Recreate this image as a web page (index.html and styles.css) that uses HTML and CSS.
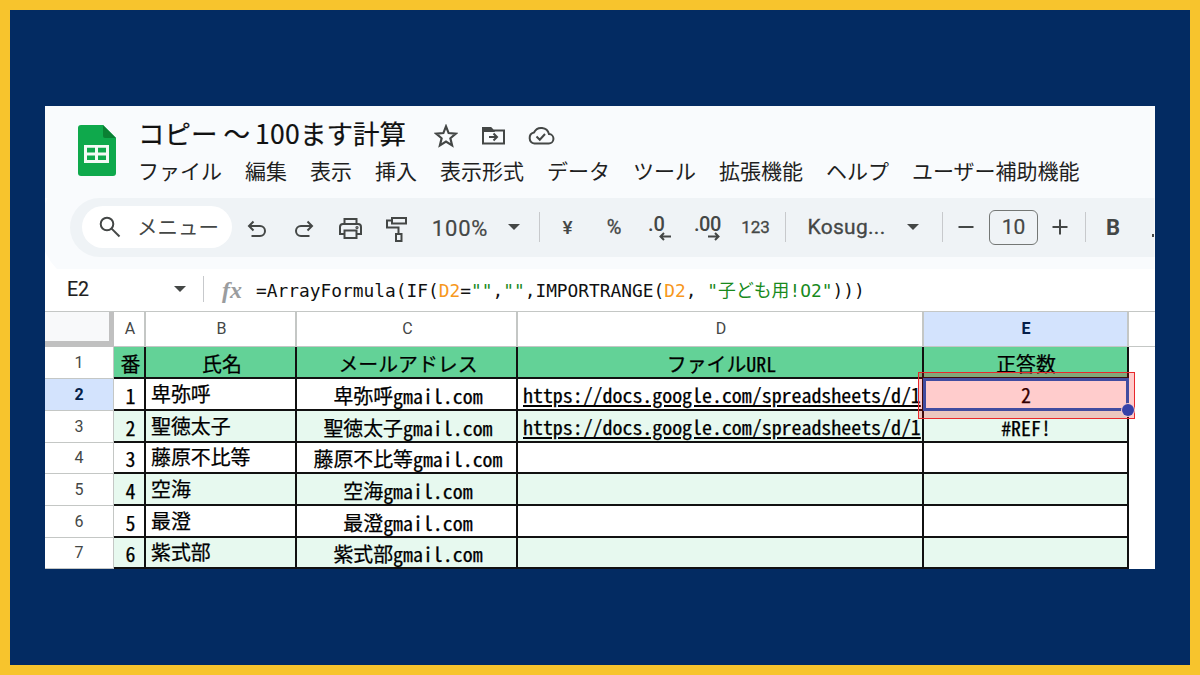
FILE: index.html
```html
<!DOCTYPE html>
<html lang="ja">
<head>
<meta charset="utf-8">
<title>コピー 〜 100ます計算</title>
<link rel="stylesheet" href="styles.css">
</head>
<body>
<main class="window">
  <header class="head">
    <svg class="logo" viewBox="0 0 38 51"><path d="M3 0H25L38 13V48Q38 51 35 51H3Q0 51 0 48V3Q0 0 3 0Z" fill="#0fa94c"/><path d="M25 0L38 13H27Q25 13 25 11Z" fill="#0a8033"/><path d="M6 20H31V38H6ZM9 22.800V27.500H17V22.800ZM20 22.800V27.500H28V22.800ZM9 30.500V35H17V30.500ZM20 30.500V35H28V30.500Z" fill="#f4fbf6" fill-rule="evenodd"/></svg>
    <div class="heading">
      <div class="title-row">
        <h1 class="title">コピー 〜 <span class="hundred">100</span>ます計算</h1>
        <svg class="star" viewBox="0 0 22 22"><path d="M11 2.200L13.400 8.300L20 8.800L15 13.100L16.600 19.600L11 16.100L5.400 19.600L7 13.100L2 8.800L8.600 8.300Z"/></svg>
        <svg class="folder" viewBox="0 0 25 20"><path d="M2 4V17.500H23V4.500H12L9.500 2H2Z"/><path class="tab" d="M2 2H9.500L12 5H2Z"/><path d="M8 11H16M12.500 7.500L16 11L12.500 14.500"/></svg>
        <svg class="cloud" viewBox="0 0 28 20"><path d="M7.500 17.500H21.500A4.700 4.700 0 0 0 22 8.100A8 8 0 0 0 7 6.500A5.600 5.600 0 0 0 7.500 17.500Z"/><path d="M9.500 10.500L12.800 13.700L18 8"/></svg>
      </div>
      <nav class="menu"><span>ファイル</span><span>編集</span><span>表示</span><span>挿入</span><span>表示形式</span><span>データ</span><span>ツール</span><span>拡張機能</span><span>ヘルプ</span><span>ユーザー補助機能</span></nav>
    </div>
  </header>

  <div class="toolbar">
    <div class="search"><svg class="lens" viewBox="0 0 22 22"><circle cx="8" cy="8" r="6.300"/><path d="M12.600 12.600L20.500 20.500"/></svg><span>メニュー</span></div>
    <div class="tools">
      <div class="tool"><svg class="ico drop" width="20" height="18" viewBox="0 0 20 18"><path d="M6.500 1.500L2 6L6.500 10.500M2 6H13A5 5 0 0 1 13 16H4.500"/></svg></div>
      <div class="tool"><svg class="ico drop" width="20" height="18" viewBox="0 0 20 18"><path d="M13.500 1.500L18 6L13.500 10.500M18 6H7A5 5 0 0 0 7 16H15.500"/></svg></div>
      <div class="tool"><svg class="ico print" width="25" height="23" viewBox="0 0 25 23"><path d="M6.500 7V2H18.500V7M6 17H2V10Q2 7 5 7H20Q23 7 23 10V17H19M6.500 13.500H18.500V21H6.500Z"/><circle cx="19" cy="10.500" r=".6"/></svg></div>
      <div class="tool"><svg class="ico roller" width="23" height="27" viewBox="0 0 23 27"><path d="M7 2H21V7.500H7ZM7 4.500H2V11.500H13.500V18M11 18H16.500V25H11Z"/></svg></div>
      <div class="tool zoom">100%</div>
      <div class="tool"><i class="caret"></i></div>
      <div class="tool"><i class="sep"></i></div>
      <div class="tool small">¥</div>
      <div class="tool small percent">%</div>
      <div class="tool"><div class="dec"><b>.0</b><svg width="13" height="9" viewBox="0 0 13 9"><path d="M5 1L1.500 4.500L5 8M1.500 4.500H12"/></svg></div></div>
      <div class="tool"><div class="dec more"><b>.00</b><svg width="13" height="9" viewBox="0 0 13 9"><path d="M8 1L11.500 4.500L8 8M11.500 4.500H1"/></svg></div></div>
      <div class="tool n123">123</div>
      <div class="tool"><i class="sep"></i></div>
      <div class="tool font">Kosug...</div>
      <div class="tool"><i class="caret"></i></div>
      <div class="tool"><i class="sep"></i></div>
      <div class="tool"><svg class="ico" width="16" height="16" viewBox="0 0 16 16"><path d="M0.500 8H15.500"/></svg></div>
      <div class="tool"><div class="size">10</div></div>
      <div class="tool"><svg class="ico" width="16" height="16" viewBox="0 0 16 16"><path d="M0.500 8H15.500M8 0.500V15.500"/></svg></div>
      <div class="tool"><i class="sep"></i></div>
      <div class="tool bold">B</div>
      <div class="tool edge"><i class="bit"></i></div>
    </div>
  </div>

  <div class="formula-bar">
    <span class="ref">E2</span><i class="caret"></i><i class="fsep"></i><span class="fx">fx</span>
    <code class="formula">=ArrayFormula(IF(<em>D2</em>=<q>""</q>,<q>""</q>,IMPORTRANGE(<em>D2</em>, <q>"<span class="kana">子ども用</span>!O2"</q>)))</code>
  </div>

  <div class="sheet">
    <div class="row cols"><div class="corner"></div><div>A</div><div>B</div><div>C</div><div>D</div><div class="sel">E</div><div class="rest"></div></div>
    <div class="row th"><div class="num">1</div><div>番</div><div>氏名</div><div>メールアドレス</div><div>ファイル<span class="lat">URL</span></div><div>正答数</div></div>
    <div class="row"><div class="num sel">2</div><div><span class="lat">1</span></div><div class="name">卑弥呼</div><div>卑弥呼<span class="lat">gmail.com</span></div><div class="url"><span class="lat">https://docs.google.com/spreadsheets/d/1</span></div><div class="active"><span class="lat">2</span><i class="outline"></i><i class="mark"></i><i class="handle"></i></div></div>
    <div class="row even"><div class="num">3</div><div><span class="lat">2</span></div><div class="name">聖徳太子</div><div>聖徳太子<span class="lat">gmail.com</span></div><div class="url"><span class="lat">https://docs.google.com/spreadsheets/d/1</span></div><div><span class="lat">#REF!</span></div></div>
    <div class="row"><div class="num">4</div><div><span class="lat">3</span></div><div class="name">藤原不比等</div><div>藤原不比等<span class="lat">gmail.com</span></div><div></div><div></div></div>
    <div class="row even"><div class="num">5</div><div><span class="lat">4</span></div><div class="name">空海</div><div>空海<span class="lat">gmail.com</span></div><div></div><div></div></div>
    <div class="row"><div class="num">6</div><div><span class="lat">5</span></div><div class="name">最澄</div><div>最澄<span class="lat">gmail.com</span></div><div></div><div></div></div>
    <div class="row even"><div class="num">7</div><div><span class="lat">6</span></div><div class="name">紫式部</div><div>紫式部<span class="lat">gmail.com</span></div><div></div><div></div></div>
  </div>
</main>
</body>
</html>
```
FILE: styles.css
```css
* { box-sizing: border-box; }
body {
  margin: 0;
  width: 1200px;
  height: 675px;
  padding: 96px 35px;
  border: 10px solid #f7c42d;
  background: #032b62;
  font-family: Roboto, "Noto Sans CJK JP", sans-serif;
  color: #1f1f1f;
  overflow: hidden;
}
.window { width: 1109.500px; height: 462.500px; background: #fff; overflow: hidden; }
.head { position: relative; z-index: 1; display: flex; height: 92px; padding-left: 33px; background: #f9fbfd; }
.logo { width: 38px; height: 51px; margin-top: 19px; flex: none; }
.heading { padding-left: 22px; }
.title-row { display: flex; align-items: center; height: 50px; padding-top: 9px; }
.title { margin: -5px 0 0; width: 268px; white-space: nowrap; font: 400 26.500px/36px "Noto Sans CJK JP", sans-serif; color: #111; -webkit-text-stroke: .2px #111; }
.hundred { margin-left: -1px; letter-spacing: .3px; }
.title-row svg, .lens, .ico, .dec svg { fill: none; stroke: #444746; stroke-width: 2; }
.title-row .tab { fill: #444746; }
.star { width: 24px; height: 24px; margin-left: 28px; }
.folder { width: 25px; height: 20px; margin-left: 23px; }
.cloud { width: 28px; height: 20px; margin-left: 21px; }
.menu { display: flex; gap: 23px; font: 21px/28px "Noto Sans CJK JP", sans-serif; white-space: nowrap; }

.toolbar {
  display: flex;
  align-items: center;
  height: 59px;
  margin-left: 25px;
  padding: 0 0 1px 12px;
  border-radius: 30px 0 0 30px;
  background: #eff3f6;
  box-shadow: 0 0 0 30px #f9fbfd;
  clip-path: inset(0 0 -12px -30px);
  color: #444746;
}
.search { display: flex; align-items: center; gap: 16px; width: 150px; height: 42px; padding-left: 17px; border-radius: 21px; background: #fff; flex: none; }
.search span { font: 20.500px/28px "Noto Sans CJK JP", sans-serif; margin-top: -3px; }
.lens { width: 22px; height: 22px; }
.tools {
  display: grid;
  grid-template-columns: 46px 47px 47px 44px 84px 23px 29px 27px 66px 27px 68px 27px 33px 88px 46px 13px 33px 63px 30px 21px 34px 24px;
  margin-left: 2px;
  height: 42px;
}
.tool { display: flex; align-items: center; justify-content: center; white-space: nowrap; }
.ico { flex: none; }
.drop { margin-top: 4px; }
.print { margin-top: 3px; }
.roller { margin-top: 4px; }
.caret { width: 0; height: 0; border: 6px solid transparent; border-top-color: #444746; border-bottom: 0; }
.sep { width: 1px; height: 30px; background: #c7c9cc; }
.zoom { font-size: 22px; letter-spacing: .8px; padding-top: 3px; -webkit-text-stroke: .2px #444746; }
.small { font-size: 19px; font-weight: 500; }
.percent { font-size: 20px; font-weight: 400; -webkit-text-stroke: .3px #444746; }
.n123 { font-size: 17px; -webkit-text-stroke: .3px #444746; }
.font { font-size: 21px; letter-spacing: .3px; -webkit-text-stroke: .3px #444746; padding-left: 1px; }
.dec { display: flex; flex-direction: column; height: 27px; margin-left: -8px; font-size: 20px; line-height: 20px; }
.dec b { font-weight: 500; height: 18px; }
.dec svg { align-self: flex-end; margin-right: -7px; }
.dec.more { margin-left: -1px; letter-spacing: -.4px; }
.dec.more svg { margin-right: 1px; }
.size { width: 49px; height: 35px; border: 1px solid #747775; border-radius: 6px; font-size: 21px; line-height: 33px; text-align: center; -webkit-text-stroke: .2px #444746; }
.bold { font-size: 22px; font-weight: 700; padding-top: 1px; }
.edge { justify-content: flex-end; }
.bit { width: 2px; height: 3px; margin-top: 16px; background: #444746; }

.formula-bar { display: flex; align-items: center; height: 42px; margin-top: 12px; padding: 0 0 2px 22px; }
.ref { width: 107px; font-size: 19.500px; -webkit-text-stroke: .2px #1f1f1f; }
.fsep { width: 1px; height: 26px; margin-left: 17px; background: #c7c9cc; }
.fx { width: 52px; padding: 1px 0 0 18px; font: italic 700 24px/28px "Liberation Serif", serif; color: #9a9c9e; }
.formula { margin-top: 4px; font: 17.850px/28px "DejaVu Sans Mono", "Noto Sans CJK JP", monospace; color: #111; white-space: pre; }
.formula em { font-style: normal; color: #f7981d; }
.formula q { quotes: none; color: #188a1c; }

.sheet { border-top: 1px solid #c4c7c5; font: 19.900px/24px "Noto Sans CJK JP", sans-serif; color: #000; }
.row { display: grid; grid-template-columns: 69px 32px 151px 221px 406px 205px 25.500px; grid-template-rows: 100%; height: 32px; -webkit-text-stroke: .25px #000; }
.row:nth-child(5), .row:nth-child(8) { height: 31px; }
.row > div { display: flex; align-items: center; justify-content: center; border-right: 2px solid #111; border-bottom: 2px solid #111; padding: 3px 0 0 3px; white-space: nowrap; min-width: 0; }
.row.th > div { background: #63d297; }
.row.even > div { background: #e7f9ef; }
.row.cols { height: 35px; -webkit-text-stroke: 0; }
.row.cols > div { border-color: #c4c7c5; border-width: 0 2px 1px 0; padding: 0 0 0 2px; font: 16px/20px Roboto, sans-serif; color: #444746; background: #fff; }
.row.cols > .corner { background: #f8f9fa; border-width: 0 5px 6px 0; border-color: #c0c0c0; }
.row > div.num { background: #fff; border-color: #c4c7c5; border-width: 0 1px 1px 0; padding: 0; font: 16px/20px Roboto, sans-serif; color: #444746; -webkit-text-stroke: 0; }
.row.cols > .sel, .row > div.num.sel { background: #d3e3fd; color: #041e49; font-weight: 700; }
.row.cols > .rest { border-right: 0; }
.row > .name { justify-content: flex-start; padding: 0 0 1px 5px; }
.lat { font-family: "Noto Sans Mono CJK JP", "Liberation Mono", monospace; }
.row > .url { justify-content: flex-start; padding: 2px 0 0 5px; overflow: hidden; text-decoration: underline; text-decoration-thickness: 1.500px; text-underline-offset: 2px; }
.row > div:nth-child(6) { padding-left: 1px; }
.row > .active { position: relative; padding-top: 2px; }
.mark { position: absolute; left: -6px; top: -7px; width: 217px; height: 47px; border: 1px solid #e8282c; background: rgba(255, 0, 0, .2); }
.outline { position: absolute; left: -1px; top: -1px; width: 206px; height: 33px; border: 3px solid #1260c8; }
.handle { position: absolute; z-index: 2; left: 198px; top: 25px; width: 12px; height: 12px; border-radius: 50%; background: #3742a8; box-shadow: 0 0 0 1px #f3c9d0; }
```
